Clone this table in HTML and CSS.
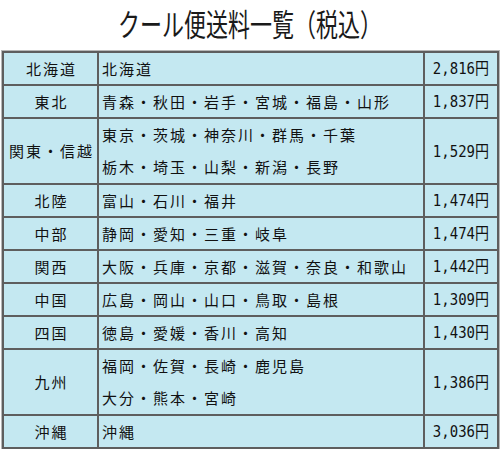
FILE: index.html
```html
<!DOCTYPE html>
<html lang="ja">
<head>
    <meta charset="UTF-8">
    <meta name="viewport" content="width=device-width, initial-scale=1.0">
    <title>クール便送料一覧</title>
    <link rel="stylesheet" href="styles.css">
</head>
<body>

<div class="page">
    <!-- タイトル -->
    <h1 class="title"><span>クール便送料一覧（税込）</span></h1>

    <!-- 送料表 -->
    <table class="fees">
        <colgroup>
            <col class="col-area">
            <col class="col-pref">
            <col class="col-price">
        </colgroup>
        <tr>
            <td class="area">北海道</td>
            <td class="pref">北海道</td>
            <td class="price"><span>2,816円</span></td>
        </tr>
        <tr>
            <td class="area">東北</td>
            <td class="pref">青森・秋田・岩手・宮城・福島・山形</td>
            <td class="price"><span>1,837円</span></td>
        </tr>
        <tr class="double">
            <td class="area">関東・信越</td>
            <td class="pref">東京・茨城・神奈川・群馬・千葉<br>栃木・埼玉・山梨・新潟・長野</td>
            <td class="price"><span>1,529円</span></td>
        </tr>
        <tr>
            <td class="area">北陸</td>
            <td class="pref">富山・石川・福井</td>
            <td class="price"><span>1,474円</span></td>
        </tr>
        <tr>
            <td class="area">中部</td>
            <td class="pref">静岡・愛知・三重・岐阜</td>
            <td class="price"><span>1,474円</span></td>
        </tr>
        <tr>
            <td class="area">関西</td>
            <td class="pref">大阪・兵庫・京都・滋賀・奈良・和歌山</td>
            <td class="price"><span>1,442円</span></td>
        </tr>
        <tr>
            <td class="area">中国</td>
            <td class="pref">広島・岡山・山口・鳥取・島根</td>
            <td class="price"><span>1,309円</span></td>
        </tr>
        <tr>
            <td class="area">四国</td>
            <td class="pref">徳島・愛媛・香川・高知</td>
            <td class="price"><span>1,430円</span></td>
        </tr>
        <tr class="double">
            <td class="area">九州</td>
            <td class="pref">福岡・佐賀・長崎・鹿児島<br>大分・熊本・宮崎</td>
            <td class="price"><span>1,386円</span></td>
        </tr>
        <tr>
            <td class="area">沖縄</td>
            <td class="pref">沖縄</td>
            <td class="price"><span>3,036円</span></td>
        </tr>
    </table>
</div>

</body>
</html>
```

FILE: styles.css
```css
body {
    font-family: "Noto Sans CJK JP", "Noto Sans", sans-serif;
    background-color: #fff;
    color: #111;
    margin: 0;
    padding: 0;
}

.page {
    width: 500px;
}

.title {
    margin: 0;
    height: 51px;
    display: flex;
    align-items: center;
    justify-content: center;
    font-size: 22px;
    font-weight: normal;
    color: #1a1a1a;
}

.title span {
    display: inline-block;
    transform: scaleY(1.4);
    margin-top: -8px;
}

.fees {
    border-collapse: collapse;
    width: 495px;
    margin-left: 2px;
    table-layout: fixed;
    box-shadow: 0 0 0 1px #b8b8b8;
}

.col-area {
    width: 95px;
}

.col-pref {
    width: 326px;
}

.col-price {
    width: 74px;
}

.fees td {
    background-color: #c4e8f1;
    border: 2px solid #5e5e5e;
    padding: 0;
    line-height: 31px;
    font-size: 15px;
    letter-spacing: 2px;
    white-space: nowrap;
}

.fees .double td {
    line-height: 32px;
}

.fees td.area {
    text-align: center;
    padding-left: 2px;
}

.fees td.pref {
    padding-left: 3px;
}

.fees td.price {
    text-align: right;
    padding-right: 8px;
    letter-spacing: 0;
    font-family: "DejaVu Sans Mono", "Noto Sans CJK JP", monospace;
    font-size: 14px;
}

.price span {
    display: inline-block;
    transform: scaleY(1.15);
}
```
